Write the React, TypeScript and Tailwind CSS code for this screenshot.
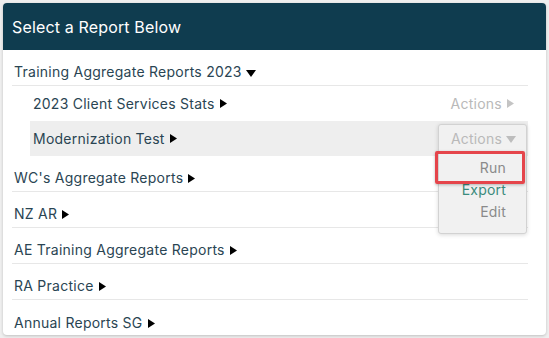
import React from 'react';

const font = { fontFamily: 'Inter, "Noto Sans", sans-serif' };

function Down({ className = '' }: { className?: string }) {
  return (
    <svg width="10" height="7" viewBox="0 0 10 7" className={className}>
      <path d="M0 0H10L5 7Z" fill="currentColor" />
    </svg>
  );
}

function Right({ className = '' }: { className?: string }) {
  return (
    <svg width="7" height="9" viewBox="0 0 7 9" className={className}>
      <path d="M0 0L7 4.5L0 9Z" fill="currentColor" />
    </svg>
  );
}

const topRows = ["WC's Aggregate Reports", 'NZ AR', 'AE Training Aggregate Reports', 'RA Practice', 'Annual Reports SG'];

function ActionsMenu() {
  return (
    <div className="absolute right-[1px] top-[3px] z-10 w-[89px] h-[110px] rounded-[3px] border border-[#d2d2d2] bg-[#f1f1f1] shadow-[0_1px_4px_rgba(0,0,0,0.15)] pt-[4px] pr-[10px] text-right text-[14px] tracking-[0.2px]">
      <div className="flex items-center justify-end gap-[4px] leading-[20px] text-[#b9b9b9]">
        Actions <Down className="text-[#bdbdbd]" />
      </div>
      <div className="mt-[8px] pr-[10px] leading-[22px]">
        <div className="text-[#8a8a8a]">Run</div>
        <div className="text-[#3a8b7c]">Export</div>
        <div className="text-[#8a8a8a]">Edit</div>
      </div>
      <div className="absolute left-[-4px] top-[26px] w-[90px] h-[33px] border-[3px] border-[#e5454b] rounded-[2px] shadow-[0_1px_3px_rgba(0,0,0,0.25)]" />
    </div>
  );
}

export default function App() {
  return (
    <div className="w-[549px] h-[338px] bg-[#efefef] p-[3px]" style={font}>
      <div className="w-[543px] h-[332px] bg-white rounded-[4px] shadow-[0_1px_3px_rgba(0,0,0,0.2)] overflow-hidden">
        <div className="h-[47px] bg-[#0f3c4f] pl-[9px] flex items-center pt-[1px]">
          <span className="text-white text-[16px] tracking-[0.15px]">Select a Report Below</span>
        </div>
        <div className="pl-[9px] pr-[18px] text-[14px] tracking-[0.25px] text-[#2a4553]">
          <div className="h-[36px] border-b border-[#e7e7e7] flex items-end pb-[3px] pl-[2px] leading-[20px]">
            <span>Training Aggregate Reports 2023</span>
            <Down className="ml-[4px] mb-[5px] text-black" />
          </div>
          <div className="ml-[18px]">
            <div className="h-[35px] flex items-center pl-[3px] pr-[14px] leading-[20px]">
              <span>2023 Client Services Stats</span>
              <Right className="ml-[5px] text-black" />
              <span className="ml-auto flex items-center gap-[5px] text-[#b9b9b9]">
                Actions <Right className="text-[#c4c4c4]" />
              </span>
            </div>
            <div className="relative h-[35px] bg-[#eeeeee] flex items-center pl-[3px] leading-[20px]">
              <span>Modernization Test</span>
              <Right className="ml-[5px] text-black" />
              <ActionsMenu />
            </div>
          </div>
          {topRows.map((r, i) => (
            <div
              key={r}
              className={`h-[36px] flex items-end pb-[3px] pl-[2px] leading-[20px] ${i < topRows.length - 1 ? 'border-b border-[#e7e7e7]' : ''}`}
            >
              <span>{r}</span>
              <Right className="ml-[5px] mb-[5px] text-black" />
            </div>
          ))}
        </div>
      </div>
    </div>
  );
}
